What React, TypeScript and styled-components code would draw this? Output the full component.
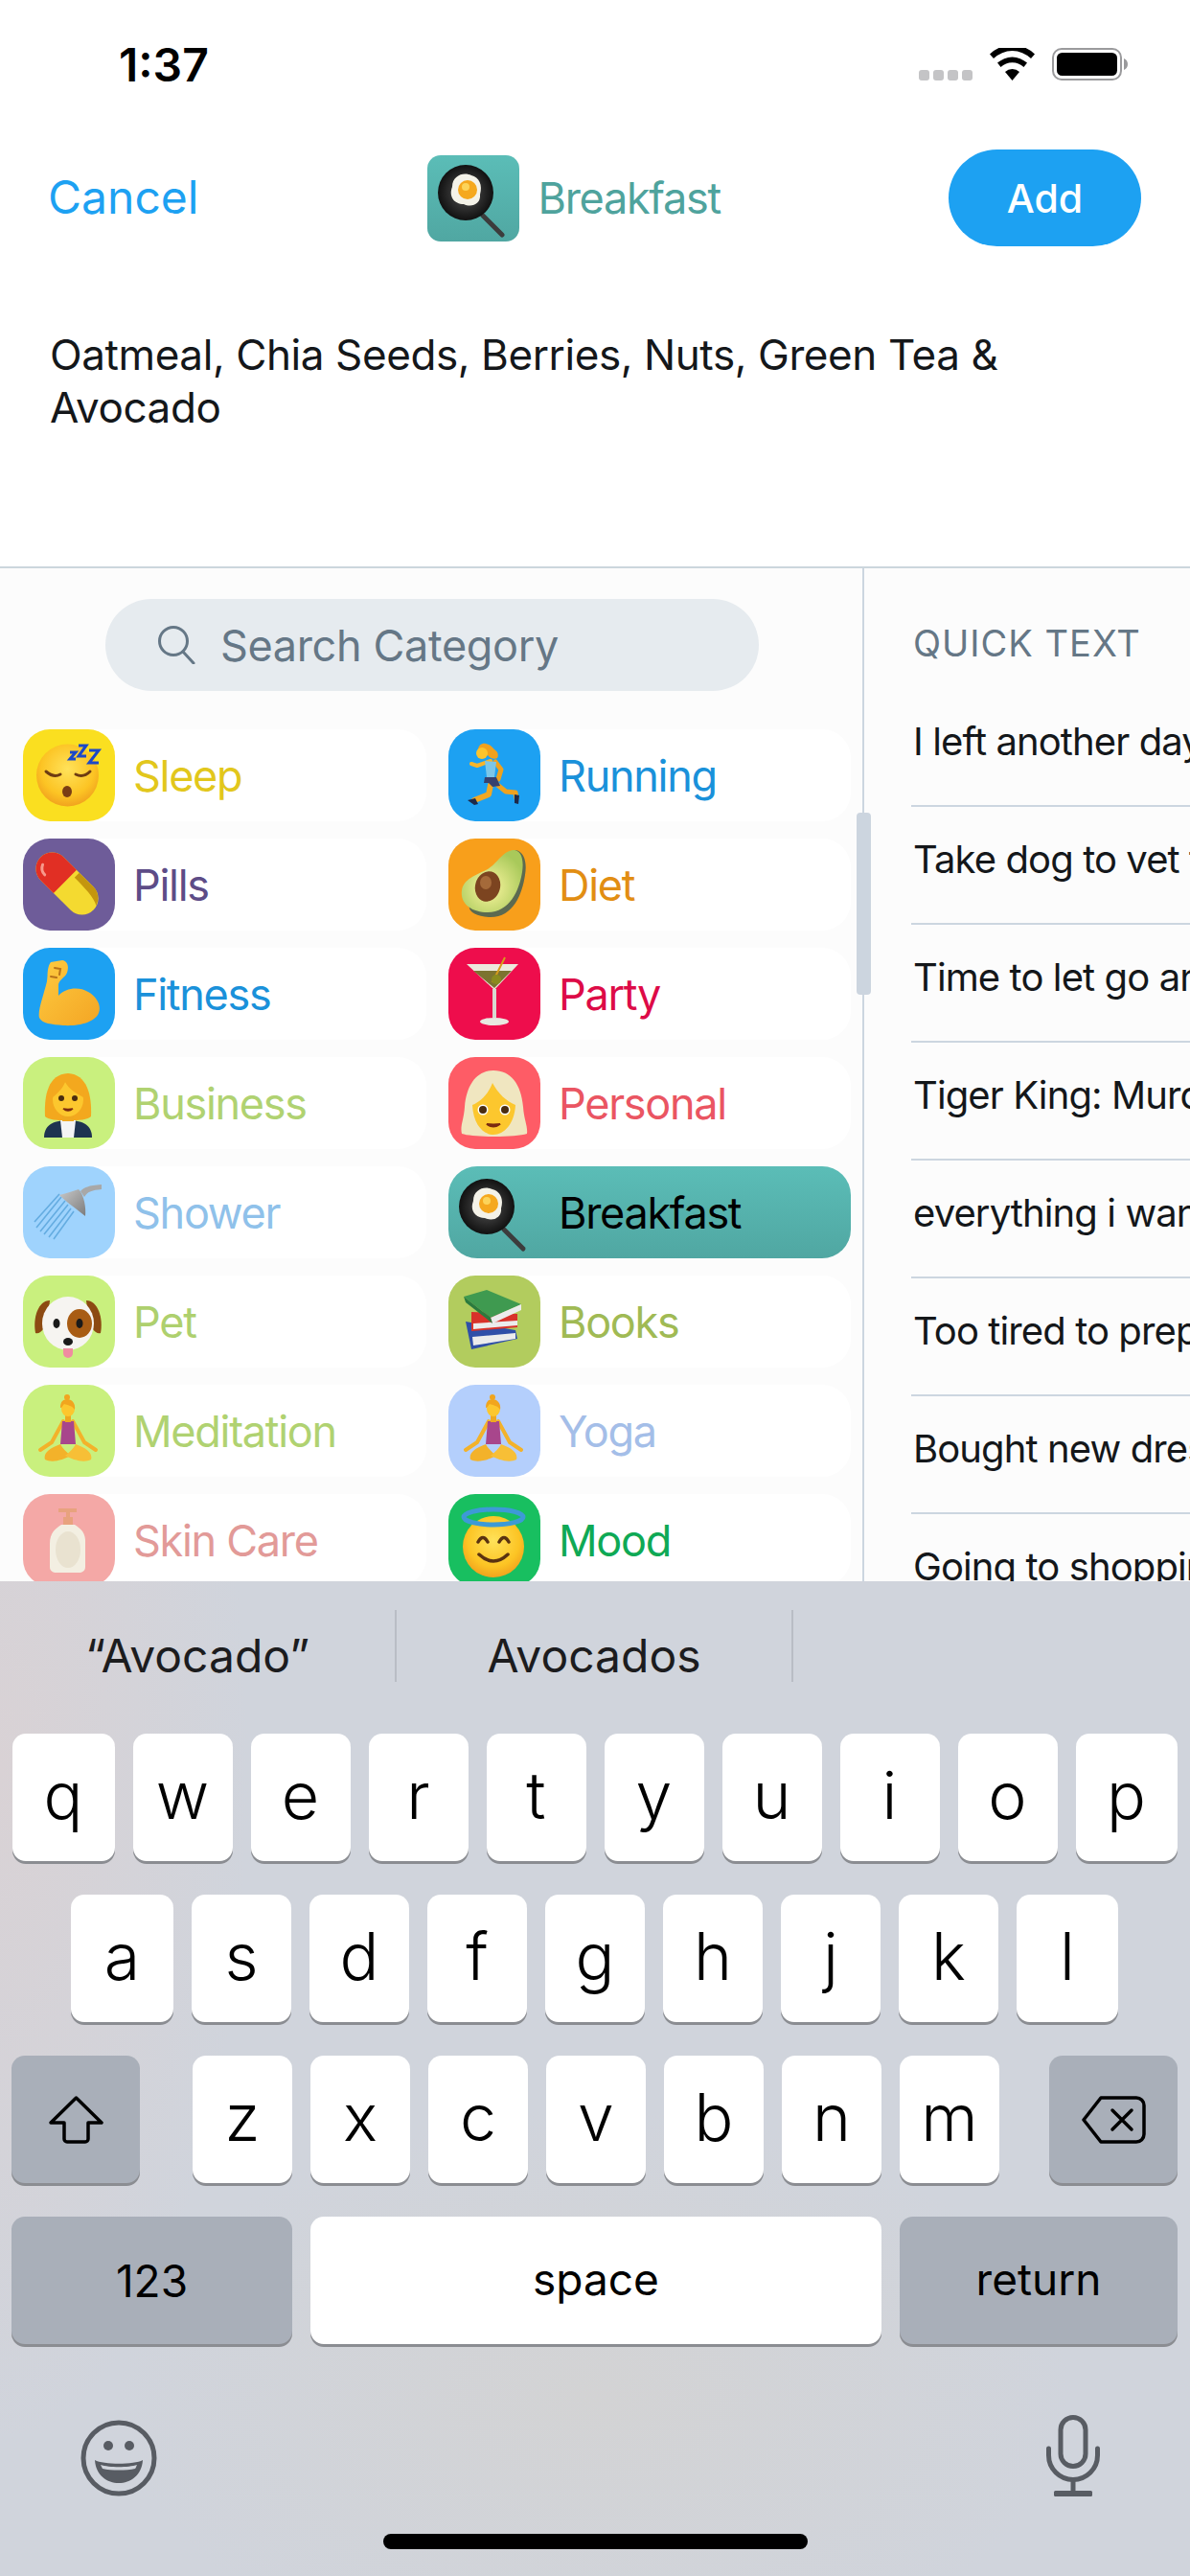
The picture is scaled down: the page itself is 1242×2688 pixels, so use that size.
import React from 'react';
import styled, { createGlobalStyle } from 'styled-components';

const GlobalStyle = createGlobalStyle`
  html, body {
    margin: 0;
    padding: 0;
    background: #fff;
    font-family: Inter, "Noto Sans", sans-serif;
  }
  * {
    box-sizing: border-box;
  }
`;

/* ---------- emoji drawings ---------- */

const FaceGradient = ({ id }: { id: string }) => (
  <defs>
    <radialGradient id={id} cx="0.5" cy="0.4" r="0.65">
      <stop offset="0" stopColor="#ffe25a" />
      <stop offset="0.65" stopColor="#fcc424" />
      <stop offset="1" stopColor="#ee9a1c" />
    </radialGradient>
  </defs>
);

const SleepEmoji = () => (
  <svg width="96" height="96" viewBox="0 0 96 96">
    <FaceGradient id="sleepFace" />
    <circle cx="46.5" cy="48" r="32.5" fill="url(#sleepFace)" />
    <path d="M24 44q8 7 15 3M55 47q8 4 15-3" fill="none" stroke="#6e3c12" strokeWidth="3" strokeLinecap="round" />
    <ellipse cx="46" cy="65" rx="5" ry="6" fill="#7a3d14" />
    <path d="M49 24h6l-6 7h6M58 17h8l-8 11h8M69 22h10l-10 13h10" fill="none" stroke="#1b48c8" strokeWidth="3" />
  </svg>
);

const RunningEmoji = () => (
  <svg width="96" height="96" viewBox="0 0 96 96">
    <path d="M44 33L30 38L24 36" fill="none" stroke="#f7b52a" strokeWidth="4" strokeLinecap="round" strokeLinejoin="round" />
    <path d="M49 34L55 42L52 52" fill="none" stroke="#eea21f" strokeWidth="5" strokeLinecap="round" strokeLinejoin="round" />
    <path d="M44 58L42 68L27 74" fill="none" stroke="#f2a823" strokeWidth="6" strokeLinecap="round" strokeLinejoin="round" />
    <path d="M50 57L60 65L70 66L71 72" fill="none" stroke="#eea21f" strokeWidth="5" strokeLinecap="round" strokeLinejoin="round" />
    <path d="M20 74l8-2l3 6l-4 1z" fill="#1d2a4a" />
    <path d="M69 68l5 1l-1 9l-4-1z" fill="#1d2a4a" />
    <path d="M38 33L50 34L48 50H40z" fill="#7cc6e8" />
    <path d="M38 50H50L54 59L46 60L42 56L37 56z" fill="#37416e" />
    <path d="M31 24c-1-7 4-10 8-9c5 1 6 3 9 6c3 2 5 5 3 9c-3 2-8 0-10-3c-2 2-5 3-7 1z" fill="#f0a11e" />
    <circle cx="35" cy="25" r="6" fill="#fcc42c" />
  </svg>
);

const PillEmoji = () => (
  <svg width="96" height="96" viewBox="0 0 96 96">
    <g transform="rotate(-45 46 47)">
      <rect x="29" y="8" width="34" height="78" rx="17" fill="#f4da30" />
      <path d="M29 44V25a17 17 0 0 1 34 0V44z" fill="#e12f24" />
      <path d="M56 48H63V69a17 17 0 0 1-12 16C56 78 56 60 56 48z" fill="#c4960e" />
      <path d="M36 24a10 10 0 0 1 6-9" fill="none" stroke="#f79a8c" strokeWidth="3" strokeLinecap="round" />
    </g>
  </svg>
);

const AvocadoEmoji = () => (
  <svg width="96" height="96" viewBox="0 0 96 96">
    <defs>
      <radialGradient id="avoFlesh" cx="0.45" cy="0.6" r="0.6">
        <stop offset="0" stopColor="#fbf6a0" />
        <stop offset="1" stopColor="#a9c95a" />
      </radialGradient>
    </defs>
    <path d="M70 12C80 14 82 26 80 38C77 58 68 82 44 82C30 82 20 76 22 70z" fill="#5c6a50" />
    <path d="M68 12C76 12 79 22 77 35C74 54 64 77 41 77C24 77 12 68 14 54C16 42 29 38 39 33C50 28 56 13 68 12z" fill="url(#avoFlesh)" />
    <ellipse cx="41" cy="50" rx="13" ry="16" transform="rotate(15 41 50)" fill="#7c4420" />
    <ellipse cx="39" cy="46" rx="6" ry="7" fill="#a56a3a" />
  </svg>
);

const MuscleEmoji = () => (
  <svg width="96" height="96" viewBox="0 0 96 96">
    <defs>
      <linearGradient id="armSkin" x1="0" y1="0" x2="1" y2="1">
        <stop offset="0" stopColor="#fdcb40" />
        <stop offset="1" stopColor="#f4a524" />
      </linearGradient>
    </defs>
    <path d="M29 15L41 13C47 14 48 20 46 26C44 31 39 32 37 38L37 50C44 42 58 40 68 46C77 51 82 60 79 68C75 78 58 82 42 81C30 80 20 79 17 73C15 66 22 48 25 35C26 28 25 20 29 15z" fill="url(#armSkin)" />
    <path d="M33 21l6 1l-1 6M29 30l6 1" fill="none" stroke="#b8721a" strokeWidth="2" strokeLinecap="round" />
  </svg>
);

const MartiniEmoji = () => (
  <svg width="96" height="96" viewBox="0 0 96 96">
    <path d="M19 17H73L48 44z" fill="#ece9dc" />
    <path d="M26 24H66L48 42z" fill="#7c7330" />
    <path d="M46 43H50L50 73H46z" fill="#d8d8d0" />
    <ellipse cx="48" cy="77" rx="15" ry="4" fill="#e8e8e0" />
    <path d="M59 10L46 36" stroke="#d79b1b" strokeWidth="2" />
    <circle cx="50" cy="33" r="5" fill="#8a8a1e" />
  </svg>
);

const BusinessEmoji = () => (
  <svg width="96" height="96" viewBox="0 0 96 96">
    <path d="M23 62C22 40 26 18 47 17C67 18 72 40 71 62C66 68 28 68 23 62z" fill="#f3a81e" />
    <path d="M22 84C22 72 30 66 47 66C64 66 72 72 72 84z" fill="#1e3350" />
    <path d="M39 66H55L53 84H41z" fill="#f4f4f4" />
    <rect x="41" y="54" width="12" height="13" fill="#efa81f" />
    <ellipse cx="47" cy="44" rx="16" ry="18" fill="#fcc72e" />
    <path d="M31 42C36 38 42 32 44 26C48 34 56 38 63 42L64 28L46 20L30 28z" fill="#f3a81e" />
    <circle cx="40" cy="43" r="3" fill="#4a2c10" />
    <circle cx="54" cy="43" r="3" fill="#4a2c10" />
    <path d="M42 54q5 4 10 0q-5 1-10 0z" fill="#7a2a10" stroke="#7a2a10" strokeWidth="1.5" />
  </svg>
);

const PersonalEmoji = () => (
  <svg width="96" height="96" viewBox="0 0 96 96">
    <path d="M14 80C12 72 16 66 17 52C19 28 30 14 47 14C65 14 76 28 78 52C79 66 83 72 82 80C70 84 26 84 14 80z" fill="#f0e6c0" />
    <path d="M25 50C26 70 36 81 47 81C58 81 69 70 70 50C60 46 52 38 46 27C42 38 34 46 25 50z" fill="#fcc72e" />
    <circle cx="36" cy="55" r="5.500" fill="#fff" />
    <circle cx="59" cy="55" r="5.500" fill="#fff" />
    <circle cx="36" cy="55" r="4" fill="#4a2c10" />
    <circle cx="59" cy="55" r="4" fill="#4a2c10" />
    <path d="M40 70q7 5 14 0q-7 1-14 0z" fill="#7a2a10" stroke="#7a2a10" strokeWidth="2" />
  </svg>
);

const ShowerEmoji = () => (
  <svg width="96" height="96" viewBox="0 0 96 96">
    <g stroke="#5aa5dc" strokeWidth="1.6" opacity="0.85">
      <path d="M40 32L14 64M44 36L18 68M47 40L22 71M50 44L27 74M53 47L32 76M38 29L12 58" />
    </g>
    <defs>
      <linearGradient id="showerMetal" x1="0" y1="0" x2="1" y2="1">
        <stop offset="0" stopColor="#c9c9c9" />
        <stop offset="1" stopColor="#7c7c7c" />
      </linearGradient>
    </defs>
    <path d="M38 30C46 28 52 26 58 24C64 30 66 44 65 52C58 46 46 38 38 30z" fill="url(#showerMetal)" />
    <path d="M60 26C64 22 68 20 82 19V24C72 25 68 26 64 32z" fill="#a8a8a8" />
  </svg>
);

const PanEmoji = ({ id = 'panEgg' }: { id?: string }) => (
  <svg width="96" height="96" viewBox="0 0 96 96">
    <defs>
      <radialGradient id={id} cx="0.5" cy="0.5" r="0.5">
        <stop offset="0" stopColor="#555" />
        <stop offset="1" stopColor="#111" />
      </radialGradient>
    </defs>
    <path d="M58 66L78 86" stroke="#3c3c3c" strokeWidth="5" strokeLinecap="round" />
    <circle cx="40" cy="42" r="29" fill={`url(#${id})`} />
    <path d="M26 36C26 24 38 20 46 24C54 26 58 34 55 44C56 54 46 58 38 54C28 54 22 46 26 36z" fill="#f4f2e8" />
    <circle cx="42" cy="39" r="10" fill="#f5a81e" />
    <circle cx="40" cy="36" r="4" fill="#fcd45a" />
  </svg>
);

const DogEmoji = () => (
  <svg width="96" height="96" viewBox="0 0 96 96">
    <path d="M28 26C16 26 10 44 13 60C18 62 24 54 26 44z" fill="#8c4a12" />
    <path d="M66 26C78 26 84 44 81 60C76 62 70 54 68 44z" fill="#8c4a12" />
    <ellipse cx="47" cy="50" rx="27" ry="28" fill="#f6f4f1" />
    <ellipse cx="59" cy="50" rx="13" ry="15" fill="#a85c14" />
    <ellipse cx="35" cy="50" rx="3.5" ry="5" fill="#1a1a1a" />
    <ellipse cx="59" cy="50" rx="3.5" ry="5" fill="#1a1a1a" />
    <path d="M42 76h10v5a5 5 0 0 1-10 0z" fill="#f08ca0" />
    <ellipse cx="47" cy="69" rx="5" ry="4" fill="#1a1a1a" />
  </svg>
);

const BooksEmoji = () => (
  <svg width="96" height="96" viewBox="0 0 96 96">
    <path d="M18 48L70 57L72 66L24 77z" fill="#2f4fa8" />
    <path d="M25 64L70 60V66L26 73z" fill="#ececec" />
    <path d="M24 38L72 40V54L24 58z" fill="#d8322a" />
    <path d="M26 50L72 47V52L26 56z" fill="#ececec" />
    <path d="M16 22L40 15L76 30L44 44z" fill="#3f9a50" />
    <path d="M44 44L76 30V36L46 50z" fill="#ececec" />
    <path d="M16 22L44 44L46 50L18 28z" fill="#2b7a3e" />
  </svg>
);

const MeditationEmoji = () => (
  <svg width="96" height="96" viewBox="0 0 96 96">
    <path d="M42 38L30 60L18 68M52 38L64 60L76 68" fill="none" stroke="#f3b22a" strokeWidth="4" strokeLinecap="round" strokeLinejoin="round" />
    <path d="M41 38H53L55 62H39z" fill="#a8468c" />
    <path d="M39 62C27 66 21 72 23 78C31 82 42 78 50 74C45 70 41 66 39 62z" fill="#f3b22a" />
    <path d="M55 62C67 66 73 72 71 78C63 82 52 78 44 74C49 70 53 66 55 62z" fill="#f7bf36" />
    <rect x="44" y="30" width="6" height="9" fill="#eea820" />
    <ellipse cx="47" cy="25" rx="7" ry="8" fill="#fcc72e" />
    <path d="M39 24C39 17 42 15 47 15C52 16 55 20 54 26C52 22 46 21 43 20C41 22 41 24 39 24z" fill="#f1a51e" />
    <circle cx="46" cy="13" r="3" fill="#f1a51e" />
  </svg>
);

const LotionEmoji = () => (
  <svg width="96" height="96" viewBox="0 0 96 96">
    <path d="M37 15H56V19H49V24H52V32H42V24H45V19H37z" fill="#e8a27e" />
    <path d="M40 32H54C60 36 66 40 65 52V76C65 80 62 82 58 82H35C31 82 28 80 28 76V52C28 40 34 36 40 32z" fill="#f3efe2" />
    <ellipse cx="47" cy="58" rx="13" ry="19" fill="#e9e2d0" />
  </svg>
);

const HaloEmoji = () => (
  <svg width="96" height="96" viewBox="0 0 96 96">
    <FaceGradient id="haloFace" />
    <circle cx="47" cy="55" r="32" fill="url(#haloFace)" />
    <ellipse cx="47" cy="24" rx="31" ry="8" fill="none" stroke="#3d9ad6" strokeWidth="5" />
    <path d="M31 50q5-9 10 0M53 50q5-9 10 0" fill="none" stroke="#5a3210" strokeWidth="3.5" strokeLinecap="round" />
    <path d="M32 63q15 14 30 0" fill="none" stroke="#5a3210" strokeWidth="3.5" strokeLinecap="round" />
  </svg>
);

/* ---------- small system icons ---------- */

const SignalDots = () => (
  <svg width="56" height="11" viewBox="0 0 56 11">
    <g fill="#c4c4c6">
      <rect x="0" width="11" height="11" rx="3" />
      <rect x="15" width="11" height="11" rx="3" />
      <rect x="30" width="11" height="11" rx="3" />
      <rect x="45" width="11" height="11" rx="3" />
    </g>
  </svg>
);

const WifiIcon = () => (
  <svg width="47" height="34" viewBox="0 0 47 34">
    <path d="M23.5 34L16 25a11 11 0 0 1 15 0z" fill="#000" />
    <path d="M11.5 20a17.5 17.5 0 0 1 24 0l3.5-4.4a23 23 0 0 0-31 0z" fill="#000" />
    <path d="M4 11a28 28 0 0 1 39 0l4-4.6a34 34 0 0 0-47 0z" fill="#000" />
  </svg>
);

const BatteryIcon = () => (
  <svg width="79" height="34" viewBox="0 0 79 34">
    <rect x="1" y="1" width="71" height="32" rx="9" fill="none" stroke="#9a9a9c" strokeWidth="2" />
    <rect x="5" y="5" width="63" height="24" rx="5.5" fill="#000" />
    <path d="M75 11c2.500 1 4 3 4 6s-1.500 5-4 6z" fill="#9a9a9c" />
  </svg>
);

const SearchIcon = () => (
  <svg width="40" height="40" viewBox="0 0 40 40">
    <circle cx="17" cy="16" r="14.500" fill="none" stroke="#657786" strokeWidth="3" />
    <path d="M27 27L38 39" stroke="#657786" strokeWidth="3" strokeLinecap="round" />
  </svg>
);

const ShiftIcon = () => (
  <svg width="57" height="50" viewBox="0 0 57 50">
    <path d="M28.500 2L55 28H41V45a3 3 0 0 1-3 3H19a3 3 0 0 1-3-3V28H2z" fill="none" stroke="#000" strokeWidth="3.500" strokeLinejoin="round" />
  </svg>
);

const DeleteIcon = () => (
  <svg width="67" height="50" viewBox="0 0 67 50">
    <path d="M20 2H57a8 8 0 0 1 8 8V40a8 8 0 0 1-8 8H20L2 25z" fill="none" stroke="#000" strokeWidth="3.500" strokeLinejoin="round" />
    <path d="M32 15L52 35M52 15L32 35" stroke="#000" strokeWidth="3.500" strokeLinecap="round" />
  </svg>
);

const EmojiKeyIcon = () => (
  <svg width="80" height="80" viewBox="0 0 80 80">
    <circle cx="40" cy="40" r="37" fill="none" stroke="#585c63" strokeWidth="5" />
    <circle cx="29" cy="27" r="5" fill="#585c63" />
    <circle cx="51" cy="27" r="5" fill="#585c63" />
    <path d="M15 42C24 47 56 47 65 42C64 58 52 66 40 66C28 66 16 58 15 42z" fill="#585c63" />
    <path d="M21 47C30 50 50 50 59 47C58 49 58 50 57 51C48 53 32 53 23 51z" fill="#d1d5dc" />
  </svg>
);

const MicIcon = () => (
  <svg width="56" height="85" viewBox="0 0 56 85">
    <rect x="15" y="2.500" width="26" height="51" rx="13" fill="none" stroke="#585c63" strokeWidth="5" />
    <path d="M2.500 35V42a25.500 25.500 0 0 0 51 0V35" fill="none" stroke="#585c63" strokeWidth="5" strokeLinecap="round" />
    <path d="M28 68V80" stroke="#585c63" strokeWidth="5" />
    <rect x="8" y="79" width="40" height="6" rx="1.500" fill="#585c63" />
  </svg>
);

/* ---------- data ---------- */

const categories = [
  { label: 'Sleep', tile: '#fadf20', text: '#e2c71c', icon: <SleepEmoji /> },
  { label: 'Running', tile: '#1da1f2', text: '#1a91da', icon: <RunningEmoji /> },
  { label: 'Pills', tile: '#6e5c99', text: '#5d4c87', icon: <PillEmoji /> },
  { label: 'Diet', tile: '#f89f1b', text: '#e28e13', icon: <AvocadoEmoji /> },
  { label: 'Fitness', tile: '#1da1f2', text: '#1a91da', icon: <MuscleEmoji /> },
  { label: 'Party', tile: '#ee0d4c', text: '#dd0b47', icon: <MartiniEmoji /> },
  { label: 'Business', tile: '#c9f07e', text: '#b0d271', icon: <BusinessEmoji /> },
  { label: 'Personal', tile: '#fe5c66', text: '#ea5562', icon: <PersonalEmoji /> },
  { label: 'Shower', tile: '#9fd3fd', text: '#8fc1ea', icon: <ShowerEmoji /> },
  { label: 'Breakfast', tile: 'transparent', text: '#000', icon: <PanEmoji id="panRow" />, selected: true },
  { label: 'Pet', tile: '#c9f07e', text: '#aed06e', icon: <DogEmoji /> },
  { label: 'Books', tile: '#b2cc5e', text: '#a0ba54', icon: <BooksEmoji /> },
  { label: 'Meditation', tile: '#c9f07e', text: '#b0d271', icon: <MeditationEmoji /> },
  { label: 'Yoga', tile: '#b4cffc', text: '#a4bee8', icon: <MeditationEmoji /> },
  { label: 'Skin Care', tile: '#f4a8a6', text: '#e29a98', icon: <LotionEmoji /> },
  { label: 'Mood', tile: '#18bf60', text: '#0fa955', icon: <HaloEmoji /> },
];

const quickTexts = [
  'I left another day',
  'Take dog to vet to',
  'Time to let go and',
  'Tiger King: Murder',
  'everything i want',
  'Too tired to prepare',
  'Bought new dress',
  'Going to shopping',
];

const App = () => {
  return (
    <Page>
      <GlobalStyle />
      <StatusBar>
        <Time>1:37</Time>
        <StatusIcons>
          <SignalDots />
          <WifiIcon />
          <BatteryIcon />
        </StatusIcons>
      </StatusBar>

      <Header>
        <Cancel>Cancel</Cancel>
        <HeaderTitle>
          <HeaderTile>
            <PanEmoji id="panHeader" />
          </HeaderTile>
          <HeaderLabel>Breakfast</HeaderLabel>
        </HeaderTitle>
        <AddButton>Add</AddButton>
      </Header>

      <Composer>Oatmeal, Chia Seeds, Berries, Nuts, Green Tea &amp; Avocado</Composer>

      <Panels>
        <CategoryPanel>
          <SearchBox>
            <SearchIcon />
            <SearchLabel>Search Category</SearchLabel>
          </SearchBox>
          <CategoryGrid>
            {categories.map(({ label, tile, text, icon, selected }) => (
              <CategoryRow key={label} $selected={selected}>
                <Tile $color={tile}>{icon}</Tile>
                <CategoryLabel $color={text}>{label}</CategoryLabel>
              </CategoryRow>
            ))}
          </CategoryGrid>
          <ScrollThumb />
        </CategoryPanel>
        <QuickPanel>
          <QuickTitle>QUICK TEXT</QuickTitle>
          {quickTexts.map((item) => (
            <QuickItem key={item}>{item}</QuickItem>
          ))}
        </QuickPanel>
      </Panels>

      <Keyboard>
        <Suggestions>
          <Suggestion>“Avocado”</Suggestion>
          <Suggestion>Avocados</Suggestion>
          <Suggestion $last />
        </Suggestions>
        <KeyRows>
          <LetterRow>
            {'qwertyuiop'.split('').map((k) => (
              <Key key={k}>{k}</Key>
            ))}
          </LetterRow>
          <LetterRow>
            {'asdfghjkl'.split('').map((k) => (
              <Key key={k}>{k}</Key>
            ))}
          </LetterRow>
          <ShiftRow>
            <ActionKey>
              <ShiftIcon />
            </ActionKey>
            <MiddleKeys>
              {'zxcvbnm'.split('').map((k) => (
                <Key key={k}>{k}</Key>
              ))}
            </MiddleKeys>
            <ActionKey>
              <DeleteIcon />
            </ActionKey>
          </ShiftRow>
          <BottomRow>
            <WordKey $dark $width={293}>123</WordKey>
            <WordKey $width={596} $raised>space</WordKey>
            <WordKey $dark $width={290} $raised>return</WordKey>
          </BottomRow>
        </KeyRows>
        <KeyboardFooter>
          <EmojiKeyIcon />
          <MicIcon />
        </KeyboardFooter>
        <HomeBar />
      </Keyboard>
    </Page>
  );
};

export default App;

const Page = styled.div`
  display: flex;
  flex-direction: column;
  width: 1242px;
  height: 2688px;
  overflow: hidden;
  background: #fff;
`;

const StatusBar = styled.div`
  display: flex;
  justify-content: space-between;
  align-items: center;
  height: 156px;
  padding: 0 65px 22px 124px;
`;

const Time = styled.div`
  font-size: 48px;
  font-weight: 600;
  color: #000;
`;

const StatusIcons = styled.div`
  display: flex;
  align-items: flex-end;
  gap: 18px;
`;

const Header = styled.div`
  display: flex;
  justify-content: space-between;
  align-items: center;
  height: 101px;
  padding: 0 51px 0 50px;
`;

const Cancel = styled.div`
  padding-bottom: 3px;
  font-size: 48px;
  color: #1da1f2;
`;

const HeaderTitle = styled.div`
  display: flex;
  align-items: center;
  gap: 20px;
`;

const HeaderTile = styled.div`
  width: 96px;
  height: 90px;
  border-radius: 14px;
  overflow: hidden;
  display: flex;
  align-items: center;
  justify-content: center;
  background: linear-gradient(#5bbdb7, #50a7a2);
`;

const HeaderLabel = styled.div`
  font-size: 45px;
  letter-spacing: -1.3px;
  color: #4fa39d;
`;

const AddButton = styled.div`
  display: flex;
  align-items: center;
  justify-content: center;
  width: 201px;
  height: 101px;
  border-radius: 51px;
  background: #1da1f2;
  color: #fff;
  font-size: 41px;
  font-weight: 500;
`;

const Composer = styled.div`
  height: 334px;
  padding: 86px 50px 0 52px;
  font-size: 44px;
  line-height: 55px;
  letter-spacing: -0.4px;
  color: #14171a;
`;

const Panels = styled.div`
  display: flex;
  height: 1059px;
  border-top: 2px solid #ccd6dd;
  background: #fcfcfc;
  overflow: hidden;
`;

const CategoryPanel = styled.div`
  position: relative;
  width: 902px;
  padding-top: 32px;
  border-right: 2px solid #ccd6e0;
`;

const SearchBox = styled.div`
  display: flex;
  align-items: center;
  gap: 26px;
  width: 682px;
  height: 96px;
  margin-left: 110px;
  padding-left: 54px;
  border-radius: 48px;
  background: #e6ebef;
`;

const SearchLabel = styled.div`
  font-size: 45px;
  letter-spacing: -0.35px;
  color: #657786;
`;

const CategoryGrid = styled.div`
  display: grid;
  grid-template-columns: 421px 420px;
  gap: 18px 23px;
  margin-top: 40px;
  padding-left: 24px;
`;

const CategoryRow = styled.div<{ $selected?: boolean }>`
  display: flex;
  align-items: center;
  gap: 19px;
  height: 96px;
  border-radius: 30px;
  background: ${(p) => (p.$selected ? 'linear-gradient(#5bbdb7, #50a7a2)' : '#fff')};
`;

const Tile = styled.div<{ $color: string }>`
  flex: none;
  width: 96px;
  height: 96px;
  border-radius: 28px;
  overflow: hidden;
  background: ${(p) => p.$color};
`;

const CategoryLabel = styled.div<{ $color: string }>`
  font-size: 45px;
  letter-spacing: -1.3px;
  color: ${(p) => p.$color};
`;

const ScrollThumb = styled.div`
  position: absolute;
  top: 255px;
  left: 894px;
  width: 15px;
  height: 190px;
  border-radius: 4px;
  background: #ccd5df;
`;

const QuickPanel = styled.div`
  flex: 1;
  min-width: 0;
  padding-left: 49px;
  overflow: hidden;
  white-space: nowrap;
`;

const QuickTitle = styled.div`
  display: flex;
  align-items: center;
  height: 126px;
  padding: 30px 0 0 2px;
  font-size: 38px;
  letter-spacing: 1px;
  color: #657786;
`;

const QuickItem = styled.div`
  display: flex;
  align-items: center;
  height: 123px;
  padding: 0 0 12px 2px;
  border-bottom: 2px solid #ccd6e0;
  font-size: 40px;
  letter-spacing: -0.9px;
  color: #14171a;
`;

const Keyboard = styled.div`
  position: relative;
  flex: 1;
  display: flex;
  flex-direction: column;
  background:
    radial-gradient(ellipse 260px 700px at 0 200px, #d9d2d5, transparent),
    radial-gradient(ellipse 500px 300px at 620px 850px, #d3d3d4, transparent),
    #d0d4dc;
`;

const Suggestions = styled.div`
  display: flex;
  height: 75px;
  margin-top: 30px;
`;

const Suggestion = styled.div<{ $last?: boolean }>`
  display: flex;
  align-items: center;
  justify-content: center;
  width: 414px;
  padding-top: 20px;
  border-right: ${(p) => (p.$last ? 'none' : '2px solid #b9bdc5')};
  font-size: 48px;
  color: #1c1c1e;
`;

const KeyRows = styled.div`
  display: flex;
  flex-direction: column;
  gap: 35px;
  margin-top: 54px;
  padding: 0 13px 0 12px;
`;

const Key = styled.div`
  display: flex;
  align-items: center;
  justify-content: center;
  flex: none;
  width: 104px;
  height: 133px;
  padding-bottom: 6px;
  border-radius: 14px;
  background: #fff;
  box-shadow: 0 3px 0 #8b8d92;
  font-size: 68px;
  font-weight: 300;
  color: #000;
`;

const LetterRow = styled.div`
  display: flex;
  justify-content: center;
  gap: 19px;

  ${Key}:first-child {
    width: 107px;
  }

  ${Key}:last-child {
    width: 106px;
  }
`;

const ShiftRow = styled.div`
  display: flex;
`;

const MiddleKeys = styled.div`
  display: flex;
  gap: 19px;
  margin: 0 auto 0 55px;
`;

const ActionKey = styled.div`
  display: flex;
  align-items: center;
  justify-content: center;
  width: 134px;
  height: 133px;
  border-radius: 14px;
  background: #a9afb9;
  box-shadow: 0 3px 0 #8b8d92;
`;

const BottomRow = styled.div`
  display: flex;
  gap: 19px;
`;

const WordKey = styled.div<{ $dark?: boolean; $width: number; $raised?: boolean }>`
  display: flex;
  align-items: center;
  justify-content: center;
  width: ${(p) => p.$width}px;
  height: 133px;
  padding-bottom: ${(p) => (p.$raised ? 4 : 0)}px;
  border-radius: 14px;
  background: ${(p) => (p.$dark ? '#a9afb9' : '#fff')};
  box-shadow: 0 3px 0 #8b8d92;
  font-size: 46px;
  color: #000;
`;

const KeyboardFooter = styled.div`
  display: flex;
  justify-content: space-between;
  align-items: flex-end;
  margin-top: 74px;
  padding: 0 94px 0 84px;
`;

const HomeBar = styled.div`
  width: 443px;
  height: 16px;
  margin: 39px auto 0;
  border-radius: 8px;
  background: #000;
`;
